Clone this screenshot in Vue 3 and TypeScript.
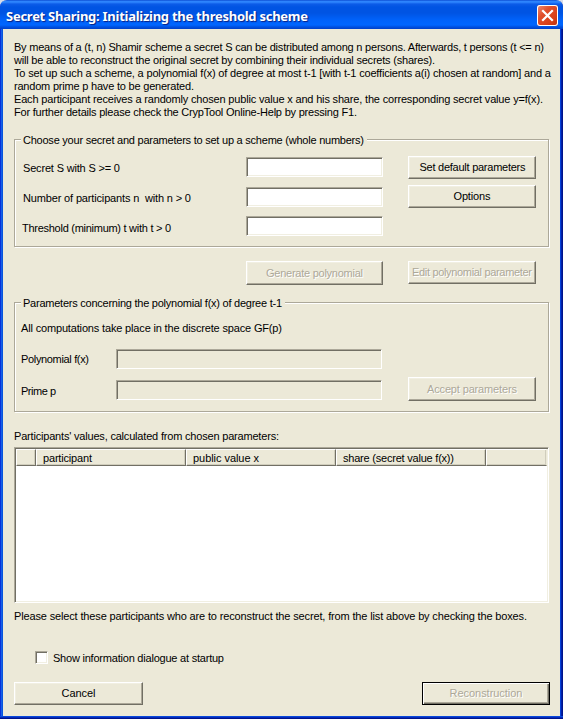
<script setup lang="ts">
import { ref } from 'vue'

interface Line {
  text: string
  width: number
}

interface Field {
  id: string
  label: string
  width: number
}

// Adjusts tracking so that a single line of text fills the given width in pixels.
const vFit = {
  mounted(el: HTMLElement, binding: { value: number }) {
    const natural = el.getBoundingClientRect().width
    const count = (el.textContent ?? '').length
    if (count > 1) {
      const tracking = (binding.value - natural) / (count - 1)
      el.style.letterSpacing = `${tracking.toFixed(3)}px`
      el.style.marginRight = `${(-tracking).toFixed(3)}px`
    }
  },
}

const intro: Line[] = [
  { text: 'By means of a (t, n) Shamir scheme a secret S can be distributed among n persons. Afterwards, t persons (t <= n)', width: 530 },
  { text: 'will be able to reconstruct the original secret by combining their individual secrets (shares).', width: 421 },
  { text: 'To set up such a scheme, a polynomial f(x) of degree at most t-1 [with t-1 coefficients a(i) chosen at random] and a', width: 537 },
  { text: 'random prime p have to be generated.', width: 180 },
  { text: 'Each participant receives a randomly chosen public value x and his share, the corresponding secret value y=f(x).', width: 529 },
  { text: 'For further details please check the CrypTool Online-Help by pressing F1.', width: 343 },
]

const fields: Field[] = [
  { id: 'secret', label: 'Secret S with S >= 0', width: 97 },
  { id: 'number', label: 'Number of participants n\u00a0 with n > 0', width: 168 },
  { id: 'threshold', label: 'Threshold (minimum) t with t > 0', width: 149 },
]

const values = ref<Record<string, string>>({ secret: '', number: '', threshold: '' })

const columns: Line[] = [
  { text: 'participant', width: 49 },
  { text: 'public value x', width: 66 },
  { text: 'share (secret value f(x))', width: 111 },
]

const showInfo = ref(false)
</script>

<template>
  <div class="window">
    <header class="titlebar">
      <h1 class="title"><span v-fit="302" class="t">Secret Sharing: Initializing the threshold scheme</span></h1>
      <button class="close" aria-label="Close">
        <svg viewBox="0 0 21 21" width="21" height="21">
          <path d="M6 6 L15 15 M15 6 L6 15" stroke="#fff" stroke-width="2.2" stroke-linecap="square" fill="none" />
        </svg>
      </button>
    </header>

    <main class="body">
      <div class="intro">
        <div v-for="line in intro" :key="line.text" class="line">
          <span v-fit="line.width" class="t">{{ line.text }}</span>
        </div>
      </div>

      <section class="group setup">
        <div class="legend"><span v-fit="341" class="t">Choose your secret and parameters to set up a scheme (whole numbers)</span></div>
        <div class="setup-grid">
          <div class="fields">
            <div v-for="field in fields" :key="field.id" class="field" :class="field.id">
              <label :for="field.id"><span v-fit="field.width" class="t">{{ field.label }}</span></label>
              <input :id="field.id" v-model="values[field.id]" class="sunken" type="text" />
            </div>
          </div>
          <div class="side">
            <button class="btn"><span v-fit="107" class="t nudge">Set default parameters</span></button>
            <button class="btn"><span v-fit="37" class="t">Options</span></button>
          </div>
        </div>
      </section>

      <div class="poly-actions">
        <button class="btn generate" disabled><span v-fit="97" class="t">Generate polynomial</span></button>
        <button class="btn edit" disabled><span v-fit="120" class="t">Edit polynomial parameter</span></button>
      </div>

      <section class="group poly">
        <div class="legend"><span v-fit="259" class="t">Parameters concerning the polynomial f(x) of degree t-1</span></div>
        <div class="note"><span v-fit="261" class="t">All computations take place in the discrete space GF(p)</span></div>
        <div class="poly-row">
          <label for="fx"><span v-fit="68" class="t">Polynomial f(x)</span></label>
          <input id="fx" class="sunken" type="text" disabled />
        </div>
        <div class="poly-row prime">
          <label for="prime"><span v-fit="35" class="t">Prime p</span></label>
          <input id="prime" class="sunken" type="text" disabled />
          <button class="btn accept" disabled><span v-fit="90" class="t">Accept parameters</span></button>
        </div>
      </section>

      <div class="list-title"><span v-fit="265" class="t">Participants' values, calculated from chosen parameters:</span></div>

      <div class="list sunken">
        <div class="head">
          <div class="cell"></div>
          <div v-for="column in columns" :key="column.text" class="cell">
            <span v-fit="column.width" class="t">{{ column.text }}</span>
          </div>
          <div class="cell last"></div>
        </div>
      </div>

      <div class="hint"><span v-fit="513" class="t">Please select these participants who are to reconstruct the secret, from the list above by checking the boxes.</span></div>

      <label class="startup">
        <input v-model="showInfo" class="check sunken" type="checkbox" />
        <span v-fit="171" class="t">Show information dialogue at startup</span>
      </label>

      <footer class="footer">
        <button class="btn"><span v-fit="34" class="t">Cancel</span></button>
        <button class="btn default" disabled><span v-fit="73" class="t">Reconstruction</span></button>
      </footer>
    </main>
  </div>
</template>

<style>
body {
  background: #d8dce8;
  overflow: hidden;
}
</style>

<style scoped>
.window {
  box-sizing: border-box;
  width: 563px;
  height: 719px;
  display: flex;
  flex-direction: column;
  overflow: hidden;
  border-radius: 7px 7px 0 0;
  padding: 0 3px 3px;
  background:
    linear-gradient(to top, #00138c 0 1px, #0429b8 1px 2px, #0848dc 2px 3px, transparent 3px),
    linear-gradient(to right, #0831d9 0 1px, #1660e8 1px 2px, #0855dd 2px 3px, transparent 3px 560px, #0440d8 560px 561px, #0020a8 561px 562px, #00138c 562px);
  font: 11px/13px "Liberation Sans", Arial, sans-serif;
  color: #000;
}

.t {
  display: inline-block;
  white-space: pre;
}

.titlebar {
  flex: none;
  box-sizing: border-box;
  height: 29px;
  margin: 0 -3px;
  padding: 5px 5px 0 6px;
  display: flex;
  justify-content: space-between;
  background: linear-gradient(to bottom, #0540c8 0, #2a80fa 1px, #3088ff 2px, #0c5ce8 4px, #0054e3 7px, #0054e3 13px, #0062fa 20px, #0066ff 25px, #0050e0 27px, #0040c8 29px);
}

.title {
  margin: 0;
  font: bold 13px/22px "Noto Sans", "Open Sans", sans-serif;
  color: #fff;
  text-shadow: 1px 1px 1px #0a2080;
}

.close {
  width: 21px;
  height: 21px;
  padding: 0;
  border: 0;
  border-radius: 3px;
  background: linear-gradient(135deg, #f09078 0, #e0502c 35%, #d84018 70%, #b83010 100%);
  box-shadow: inset 0 0 0 1px #fff;
}

.close svg {
  display: block;
}

.body {
  flex: 1;
  display: flex;
  flex-direction: column;
  background: #ece9d8;
  padding: 12px 11px 0;
}

.line {
  height: 13px;
}

.group {
  box-sizing: border-box;
  width: 535px;
  border: 1px solid #aca899;
  box-shadow: 1px 1px 0 #fff, inset 1px 1px 0 #fff;
}

.legend {
  width: fit-content;
  margin: -6px 0 0 6px;
  padding: 0 3px 0 2px;
  background: #ece9d8;
}

.setup {
  height: 108px;
  margin-top: 20px;
}

.setup-grid {
  display: flex;
  gap: 25px;
  padding: 10px 0 0 7px;
}

.fields {
  width: 361px;
  display: flex;
  flex-direction: column;
  gap: 10px;
}

.field {
  display: flex;
  justify-content: space-between;
  align-items: center;
  padding-left: 1px;
}

.field label {
  padding-top: 2px;
}

.field.threshold {
  padding-left: 0;
  margin-top: -1px;
}

.field.threshold label {
  padding-top: 5px;
}

.side {
  display: flex;
  flex-direction: column;
  gap: 6px;
  margin-top: -1px;
}

input {
  margin: 0;
  padding: 0 3px;
  font: inherit;
  outline: 0;
  border-radius: 0;
}

.sunken {
  box-sizing: border-box;
  border: 1px solid;
  border-color: #aca899 #fff #fff #aca899;
  box-shadow: inset 1px 1px 0 #716f64, inset -1px -1px 0 #f1efe2;
  background: #fff;
}

.field .sunken {
  width: 137px;
  height: 20px;
}

.sunken:disabled {
  background: #ece9d8;
  box-shadow: inset 1px 1px 0 #716f64;
}

.btn {
  box-sizing: border-box;
  width: 128px;
  height: 23px;
  padding: 0;
  display: flex;
  align-items: center;
  justify-content: center;
  font: inherit;
  color: #000;
  background: #ece9d8;
  border: 1px solid;
  border-color: #fff #716f64 #716f64 #fff;
  border-radius: 0;
  box-shadow: inset -1px -1px 0 #aca899, inset 1px 1px 0 #f1efe2;
}

.btn:disabled {
  color: #aca899;
  text-shadow: 1px 1px 0 #fff;
}

.nudge {
  padding-left: 1px;
}

.poly-actions {
  display: flex;
  gap: 25px;
  padding-left: 232px;
  margin-top: 14px;
  height: 24px;
}

.generate {
  width: 137px;
  height: 24px;
}

.poly {
  height: 110px;
  margin-top: 17px;
}

.note {
  margin: 12px 0 0 6px;
}

.poly-row {
  display: flex;
  align-items: center;
  margin: 14px 0 0 6px;
  height: 20px;
}

.poly-row.prime {
  margin-top: 11px;
}

.poly-row label {
  width: 95px;
}

.poly-row.prime label {
  padding-top: 2px;
}

.poly-row .sunken {
  width: 266px;
  height: 20px;
}

.accept {
  height: 24px;
  margin: -2px 0 0 26px;
}

.list-title {
  margin-top: 18px;
}

.list {
  width: 535px;
  height: 156px;
  margin-top: 4px;
  padding: 1px;
}

.head {
  display: grid;
  grid-template-columns: 20px 150px 150px 150px 1fr;
  height: 17px;
  background: #ece9d8;
}

.cell {
  box-sizing: border-box;
  padding: 2px 0 0 6px;
  border: 1px solid;
  border-color: #fff #716f64 #716f64 #fff;
  box-shadow: inset -1px -1px 0 #d0cdbc;
}

.cell.last {
  border-right-color: #ece9d8;
}

.hint {
  margin-top: 7px;
}

.startup {
  display: flex;
  align-items: center;
  gap: 5px;
  margin: 28px 0 0 21px;
  height: 13px;
}

.startup .t {
  padding-top: 2px;
}

.check {
  appearance: none;
  width: 13px;
  height: 13px;
}

.footer {
  display: flex;
  justify-content: space-between;
  width: 536px;
  margin-top: 18px;
}

.footer .btn {
  width: 129px;
}

.footer .default {
  width: 128px;
  border-color: #000;
  box-shadow: inset 1px 1px 0 #fff, inset -1px -1px 0 #716f64, inset -2px -2px 0 #aca899;
}
</style>
